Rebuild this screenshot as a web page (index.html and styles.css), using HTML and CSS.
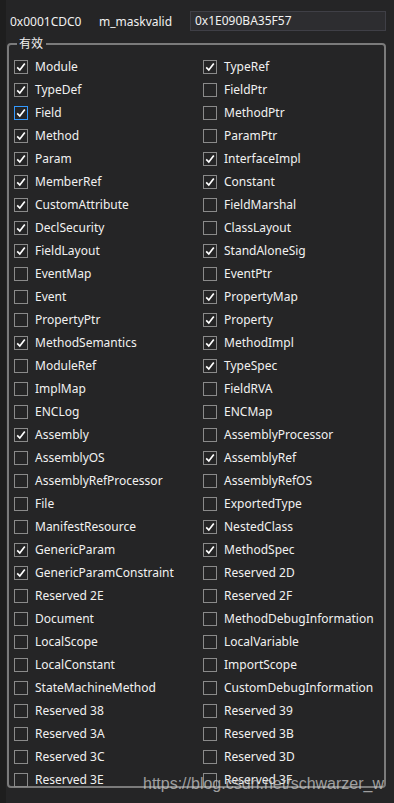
FILE: index.html
```html
<!DOCTYPE html>
<html lang="zh">
<head>
  <meta charset="UTF-8" />
  <title>m_maskvalid</title>
  <link rel="stylesheet" href="styles.css">
</head>
<body>
  <div class="pane">
    <div class="field-row">
      <span class="offset">0x0001CDC0</span>
      <span class="name">m_maskvalid</span>
      <div class="value">0x1E090BA35F57</div>
    </div>

    <fieldset class="group">
      <legend>有效</legend>
      <div class="flags" id="flags"></div>
    </fieldset>

    <div class="watermark">https://blog.csdn.net/schwarzer_w</div>
  </div>

  <script>
    // [name, checked] in display order (left, right, left, right ...)
    var flags = [
      ["Module", 1], ["TypeRef", 1],
      ["TypeDef", 1], ["FieldPtr", 0],
      ["Field", 1, "focus"], ["MethodPtr", 0],
      ["Method", 1], ["ParamPtr", 0],
      ["Param", 1], ["InterfaceImpl", 1],
      ["MemberRef", 1], ["Constant", 1],
      ["CustomAttribute", 1], ["FieldMarshal", 0],
      ["DeclSecurity", 1], ["ClassLayout", 0],
      ["FieldLayout", 1], ["StandAloneSig", 1],
      ["EventMap", 0], ["EventPtr", 0],
      ["Event", 0], ["PropertyMap", 1],
      ["PropertyPtr", 0], ["Property", 1],
      ["MethodSemantics", 1], ["MethodImpl", 1],
      ["ModuleRef", 0], ["TypeSpec", 1],
      ["ImplMap", 0], ["FieldRVA", 0],
      ["ENCLog", 0], ["ENCMap", 0],
      ["Assembly", 1], ["AssemblyProcessor", 0],
      ["AssemblyOS", 0], ["AssemblyRef", 1],
      ["AssemblyRefProcessor", 0], ["AssemblyRefOS", 0],
      ["File", 0], ["ExportedType", 0],
      ["ManifestResource", 0], ["NestedClass", 1],
      ["GenericParam", 1], ["MethodSpec", 1],
      ["GenericParamConstraint", 1], ["Reserved 2D", 0],
      ["Reserved 2E", 0], ["Reserved 2F", 0],
      ["Document", 0], ["MethodDebugInformation", 0],
      ["LocalScope", 0], ["LocalVariable", 0],
      ["LocalConstant", 0], ["ImportScope", 0],
      ["StateMachineMethod", 0], ["CustomDebugInformation", 0],
      ["Reserved 38", 0], ["Reserved 39", 0],
      ["Reserved 3A", 0], ["Reserved 3B", 0],
      ["Reserved 3C", 0], ["Reserved 3D", 0],
      ["Reserved 3E", 0], ["Reserved 3F", 0]
    ];

    var tick = '<svg viewBox="0 0 14 14" width="14" height="14">' +
      '<path d="M3.2 7.4 L5.8 10 L10.8 3.6" fill="none" stroke="#fff" stroke-width="1.7"/></svg>';

    var list = document.getElementById("flags");
    flags.forEach(function (f) {
      var item = document.createElement("div");
      item.className = "flag";
      var box = '<span class="box' + (f[2] ? " focus" : "") + '">' + (f[1] ? tick : "") + '</span>';
      item.innerHTML = box + '<span class="label">' + f[0] + '</span>';
      list.appendChild(item);
    });
  </script>
</body>
</html>
```

FILE: styles.css
```css
html, body {
  margin: 0;
  height: 100%;
}

body {
  background: #252526;
  color: #f1f1f1;
  font-family: "Noto Sans", "Noto Sans CJK SC", sans-serif;
  font-size: 12px;
}

.pane {
  position: relative;
  height: 100%;
  box-sizing: border-box;
  border-left: 6px solid #1e1e1e;
  padding-top: 11px;
}

.field-row {
  display: flex;
  align-items: center;
  height: 20px;
  padding-left: 4px;
}

.offset {
  width: 89px;
}

.name {
  width: 91px;
}

.value {
  flex: 1;
  height: 18px;
  line-height: 18px;
  margin-right: 8px;
  padding-left: 4px;
  background: #2d2d30;
  border: 1px solid #3f3f46;
}

.group {
  margin: 5px 8px 0 1px;
  padding: 0 0 3px 5px;
  border: 2px solid #7b7b7b;
  border-radius: 4px;
  height: 752px;
  box-sizing: border-box;
}

.group legend {
  padding: 0 3px 0 2px;
  margin-left: 3px;
  line-height: 16px;
}

.flags {
  display: grid;
  grid-template-columns: 189px 1fr;
  grid-auto-rows: 23px;
  padding-top: 3px;
}

.flag {
  display: flex;
  align-items: center;
  gap: 7px;
  white-space: nowrap;
}

.box {
  width: 12px;
  height: 12px;
  border: 1px solid #8a8a8a;
  background: #252526;
  position: relative;
  flex: none;
}

.box svg {
  position: absolute;
  left: -1px;
  top: -1px;
}

.box.focus {
  border-color: #3399ff;
}

.watermark {
  position: absolute;
  right: 10px;
  bottom: 10px;
  font-family: "Liberation Sans", Arial, sans-serif;
  font-size: 16px;
  color: rgba(200, 200, 200, 0.75);
}
```
